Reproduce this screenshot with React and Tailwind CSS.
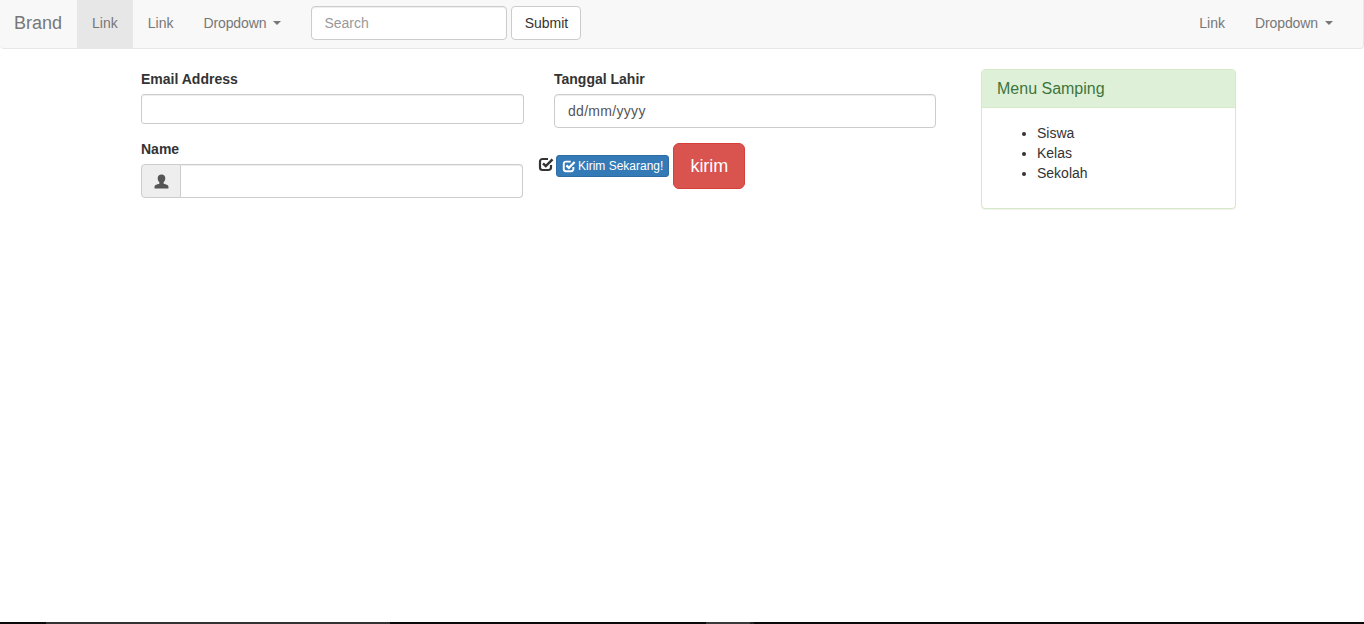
import React from 'react';

function Caret() {
  return <span className="ml-[7px] inline-block align-middle border-x-[4px] border-t-[4px] border-x-transparent border-t-[#777]" />;
}

function NavLink({ children, active = false }) {
  return (
    <a className={`flex items-center h-[48px] px-[15px] pb-[2px] text-[#777] ${active ? 'bg-[#e7e7e7] text-[#555]' : ''}`}>
      {children}
    </a>
  );
}

function UserIcon() {
  return (
    <svg width="15" height="15" viewBox="0 0 15 15" fill="#555">
      <path d="M7.500 0.500C5.100 0.500 3.700 2 3.700 4.300c0 1.700.7 3.100 1.700 4v1.200c-.6.5-3.100 1-4.200 1.700C.6 11.600.5 12.600.5 14.500h14c0-1.900-.1-2.900-.7-3.300-1.100-.7-3.600-1.200-4.200-1.700V8.300c1-.9 1.700-2.300 1.700-4 0-2.300-1.400-3.800-3.800-3.800z" />
    </svg>
  );
}

function CheckIcon({ size, className = '' }) {
  return (
    <svg width={size} height={size} viewBox="0 0 16 16" fill="none" stroke="currentColor" className={className}>
      <path strokeWidth="2.2" d="M13 9v2.500a2.500 2.500 0 0 1-2.500 2.500h-6A2.500 2.500 0 0 1 2 11.500v-6A2.500 2.500 0 0 1 4.500 3H10" />
      <path strokeWidth="2.500" d="M5 7.300l2.800 2.800L14.500 3.400" />
    </svg>
  );
}

function Navbar() {
  return (
    <nav className="flex items-center justify-between h-[49px] shrink-0 bg-[#f8f8f8] border-b border-r border-[#e7e7e7] rounded-b-[4px]">
      <div className="flex items-center">
        <a className="pl-[14px] pr-[15px] pb-[2px] text-[18px] text-[#777]">Brand</a>
        <NavLink active>Link</NavLink>
        <NavLink>Link</NavLink>
        <NavLink><span className="tracking-[-0.1px]">Dropdown</span><Caret /></NavLink>
        <form className="flex items-center gap-[4px] ml-[15px] mb-[2px]">
          <input
            placeholder="Search"
            className="w-[196px] h-[34px] px-[12px] bg-white border border-[#ccc] rounded-[4px] shadow-[inset_0_1px_1px_rgba(0,0,0,0.075)] placeholder:text-[#999]"
          />
          <button type="button" className="w-[70px] h-[34px] bg-white border border-[#ccc] rounded-[4px] text-[#333]">Submit</button>
        </form>
      </div>
      <div className="flex items-center pr-[15px]">
        <NavLink>Link</NavLink>
        <NavLink><span className="tracking-[-0.1px]">Dropdown</span><Caret /></NavLink>
      </div>
    </nav>
  );
}

function Label({ children }) {
  return <label className="block h-[20px] leading-[20px] font-bold text-[#333]">{children}</label>;
}

function FormArea() {
  return (
    <div className="flex w-[795px] pt-[20px] ml-[141px]">
      <div className="w-[383px]">
        <Label>Email Address</Label>
        <input className="block w-full h-[30px] mt-[5px] bg-white border border-[#ccc] rounded-[3px] shadow-[inset_0_1px_1px_rgba(0,0,0,0.075)]" />
        <div className="mt-[15px]">
          <Label>Name</Label>
          <div className="flex w-[382px] h-[34px] mt-[5px]">
            <span className="flex items-center justify-center w-[40px] bg-[#eee] border border-[#ccc] rounded-l-[4px]">
              <UserIcon />
            </span>
            <input className="flex-1 min-w-0 bg-white border border-l-0 border-[#ccc] rounded-r-[4px] shadow-[inset_0_1px_1px_rgba(0,0,0,0.075)]" />
          </div>
        </div>
      </div>
      <div className="w-[382px] ml-[30px]">
        <Label>Tanggal Lahir</Label>
        <input
          placeholder="dd/mm/yyyy"
          className="block w-full h-[34px] mt-[5px] px-[13px] bg-white border border-[#ccc] rounded-[4px] shadow-[inset_0_1px_1px_rgba(0,0,0,0.075)] tracking-[0.3px] placeholder:text-[#555]"
        />
        <div className="flex items-center h-[46px] mt-[15px] -ml-[16px]">
          <CheckIcon size={16} className="text-[#333] -mt-[4px]" />
          <button type="button" className="flex items-center h-[22px] ml-[2px] pl-[5px] pr-[5px] bg-[#337ab7] border border-[#2e6da4] rounded-[3px] text-[12px] text-white">
            <CheckIcon size={14} className="mr-[2px]" />
            Kirim Sekarang!
          </button>
          <button type="button" className="w-[72px] h-[46px] ml-[4px] bg-[#d9534f] border border-[#d43f3a] rounded-[6px] text-[18px] text-white">kirim</button>
        </div>
      </div>
    </div>
  );
}

function SidePanel() {
  return (
    <aside className="w-[255px] h-[140px] mt-[20px] ml-[45px] bg-white border border-[#d6e9c6] rounded-[4px] shadow-[0_1px_1px_rgba(0,0,0,0.05)]">
      <div className="h-[38px] px-[15px] bg-[#dff0d8] border-b border-[#d6e9c6] rounded-t-[3px] text-[16px] leading-[37px] text-[#3c763d]">Menu Samping</div>
      <ul className="list-disc pl-[55px] pt-[15px] text-[#333] leading-[20px]">
        <li>Siswa</li>
        <li>Kelas</li>
        <li>Sekolah</li>
      </ul>
    </aside>
  );
}

function BottomStrip() {
  return (
    <div className="flex h-[2px] shrink-0 mt-auto bg-[#0a0a0a]">
      <div className="w-[344px] ml-[46px] bg-[#333]" />
      <div className="w-[44px] ml-[316px] bg-[#3a3a3a]" />
      <div className="w-[4px] bg-[#222]" />
    </div>
  );
}

export default function App() {
  return (
    <div className="flex flex-col h-screen overflow-hidden bg-white text-[14px] leading-[20px] font-['Liberation_Sans',Arial,sans-serif]">
      <Navbar />
      <div className="flex">
        <FormArea />
        <SidePanel />
      </div>
      <BottomStrip />
    </div>
  );
}
